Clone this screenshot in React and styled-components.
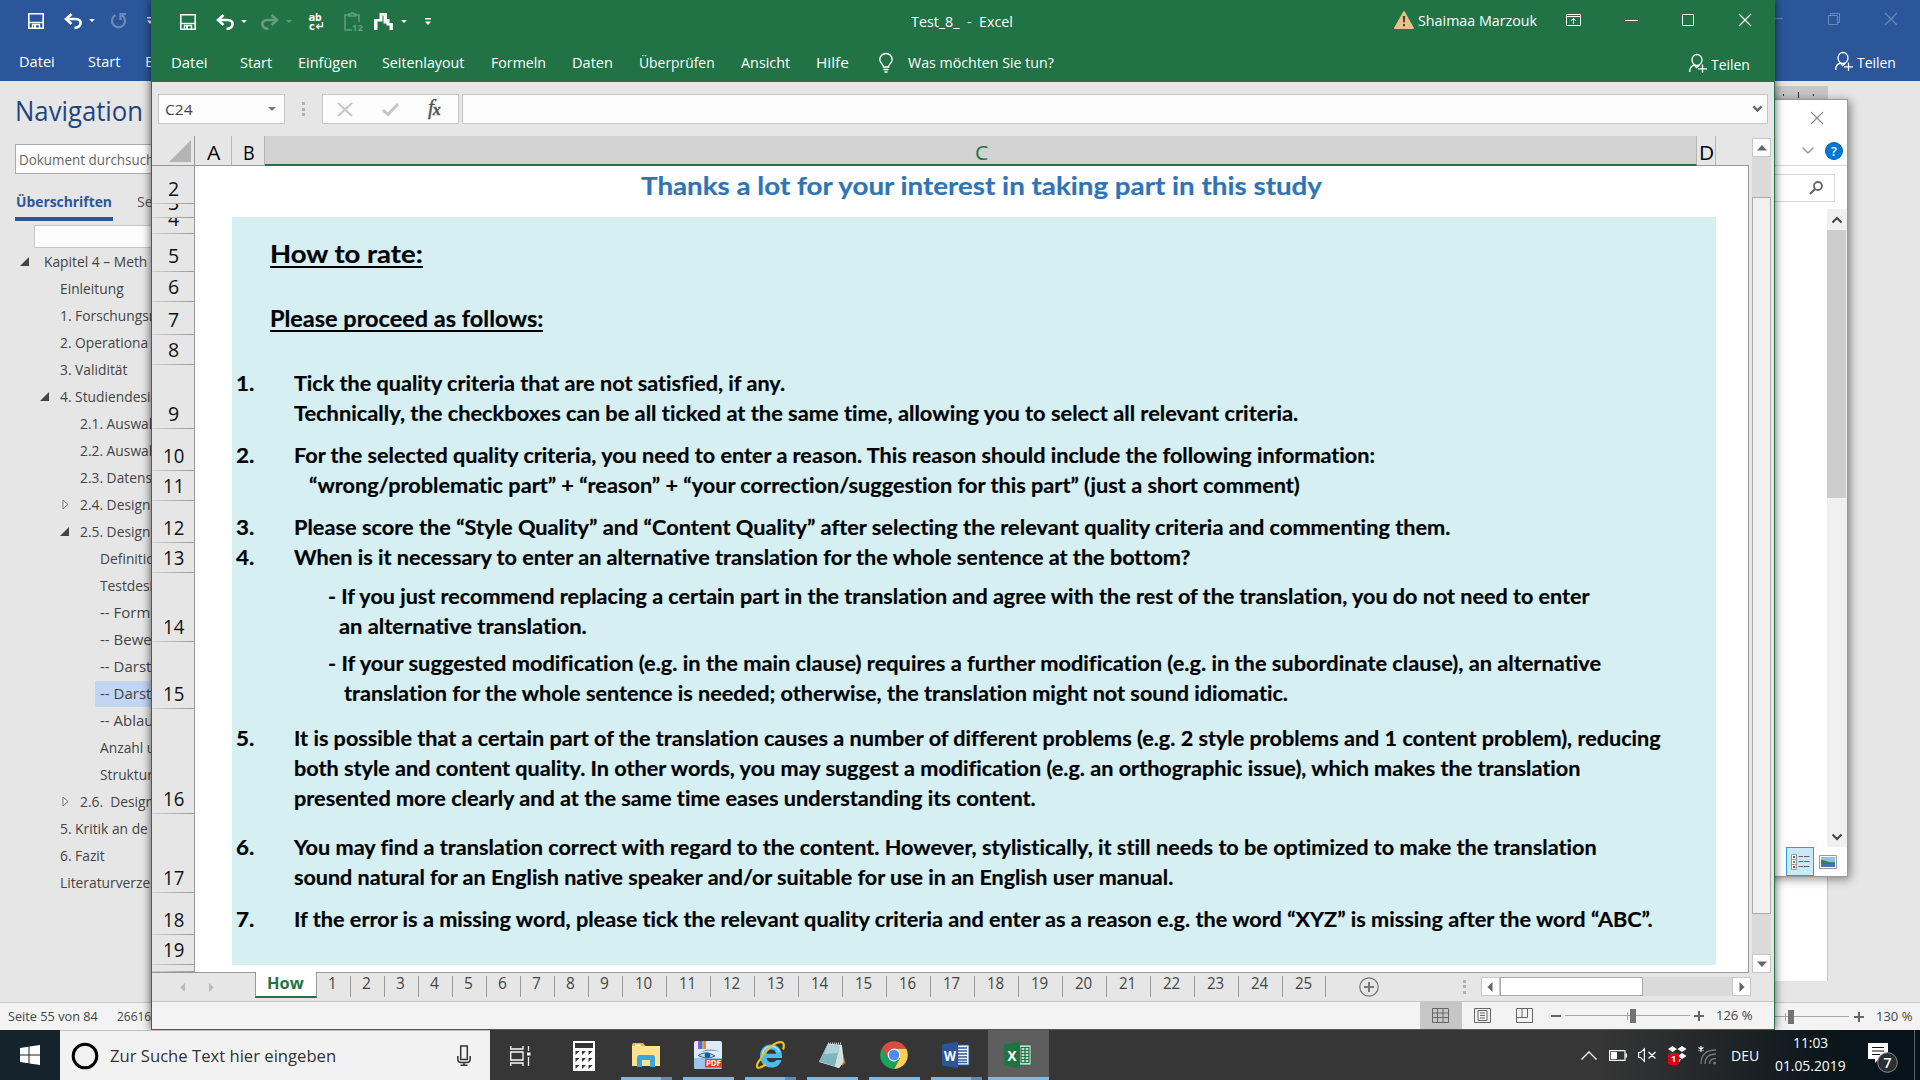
import React, { useLayoutEffect, useRef, useState } from "react";
import styled, { createGlobalStyle, css } from "styled-components";

const GlobalStyle = createGlobalStyle`
  * { box-sizing: border-box; }
  html, body { margin: 0; padding: 0; }
  body { width: 1920px; height: 1080px; overflow: hidden; background: #e6e6e6; }
  svg { display: block; flex: none; overflow: visible; }
`;

const UI = `"Open Sans", "Noto Sans", sans-serif`;
const GREEN = "#217346";
const BLUE = "#2b579a";

/* ---------- text that is condensed to a given measure ---------- */

const FitBox = styled.span`
  display: block;
  flex: none;
  width: ${(p) => p.$w}px;
  margin-left: ${(p) => p.$ml || 0}px;
  white-space: pre;
`;
const FitInner = styled.span`
  display: inline-block;
  transform-origin: 0 50%;
  white-space: pre;
`;

function Fit({ w, ml, children, className }) {
  const ref = useRef(null);
  const [scale, setScale] = useState(1);
  useLayoutEffect(() => {
    if (ref.current) setScale(w / ref.current.offsetWidth);
  }, [w]);
  return (
    <FitBox $w={w} $ml={ml} className={className}>
      <FitInner ref={ref} style={{ transform: `scaleX(${scale})` }}>{children}</FitInner>
    </FitBox>
  );
}

/* ---------- shared pieces ---------- */

const Desktop = styled.div`
  position: relative;
  width: 1920px;
  height: 1080px;
  overflow: hidden;
  background: #e6e6e6;
  font-family: ${UI};
  font-size: 15px;
`;

const Slot = styled.div`
  flex: none;
  margin-left: ${(p) => p.$ml || 0}px;
  margin-top: ${(p) => p.$mt || 0}px;
  opacity: ${(p) => (p.$dim ? 0.3 : 1)};
`;

const TitleRow = styled.div`
  display: flex;
  align-items: center;
  height: ${(p) => p.$h}px;
  line-height: ${(p) => p.$h}px;
  color: #fff;
`;

const TabRow = styled(TitleRow)``;

const Save = () => (
  <svg width="16" height="16" viewBox="0 0 16 16" fill="none" stroke="#fff">
    <path d="M.8.8H15.2V15.2H.8Z" strokeWidth="1.6" />
    <path d="M1 9.5H15" strokeWidth="1.4" />
    <path d="M4.5 15V11.5H11.5V15" strokeWidth="1.4" />
    <path d="M6 12H8V15H6Z" fill="#fff" stroke="none" />
  </svg>
);
const Undo = ({ flip }) => (
  <svg width="18" height="16" viewBox="0 0 18 16" fill="none" stroke="#fff" transform={flip ? "scale(-1,1)" : undefined}>
    <path d="M3 6H11.5C15.5 6 17 8.300 16.500 10.800 16 13.500 13.500 14.800 10.500 15" strokeWidth="2.600" />
    <path d="M7.500 1 2 6 7.500 11" strokeWidth="2.600" />
  </svg>
);
const Caret = ({ color = "#fff", w = 6 }) => (
  <svg width={w} height={w / 2} viewBox="0 0 6 3"><path d="M0 0H6L3 3Z" fill={color} /></svg>
);
const Repeat = () => (
  <svg width="17" height="17" viewBox="0 0 17 17" fill="none" stroke="#fff" strokeWidth="2.200">
    <path d="M5.500 3A6.500 6.500 0 1 0 11.500 3" /><path d="M16 2H10.500V8" />
  </svg>
);
const Customize = () => (
  <svg width="6" height="8" viewBox="0 0 6 8"><path d="M0 0H6V1.400H0ZM0 3.500H6L3 7Z" fill="#fff" /></svg>
);
const SpellSvg = styled.svg`
  font: 700 11px "DejaVu Sans Mono", "Liberation Mono", monospace;
`;
const Spell = () => (
  <SpellSvg width="16" height="18" viewBox="0 0 16 18" fill="#fff">
    <text x="0.500" y="8" textLength="13">ab</text>
    <text x="0.500" y="17">c</text>
    <path d="M14.500 9V13.500H9M11 11 8.500 13.500 11 16" stroke="#fff" strokeWidth="1.300" fill="none" />
  </SpellSvg>
);
const PasteSvg = styled.svg`
  font: 700 9px ${UI};
`;
const Paste = () => (
  <PasteSvg width="19" height="20" viewBox="0 0 19 20" fill="none" stroke="#fff" strokeWidth="1.500">
    <path d="M5 3H1V18H8M12 3H15V10" /><path d="M5 4V2H7A1.200 1.200 0 0 1 9.500 2H11.500V4Z" />
    <text x="8" y="19" fill="#fff" stroke="none" textLength="11">12</text>
  </PasteSvg>
);
const Steps = () => (
  <svg width="19" height="17" viewBox="0 0 19 17" fill="#fff">
    <path d="M0 17V6H5.500V0H13V6H15.500V10H19V17H15.500V12.500H12.500V10.500H9.500V2.500H8.500V8.500H3.500V17Z" />
  </svg>
);
const CloseX = ({ color = "#fff", s = 12 }) => (
  <svg width={s} height={s} viewBox="0 0 12 12" stroke={color} strokeWidth="1.100"><path d="M0 0 12 12M12 0 0 12" /></svg>
);
const Share = () => (
  <svg width="18" height="19" viewBox="0 0 18 19" fill="none" stroke="#fff" strokeWidth="1.300">
    <ellipse cx="8" cy="6" rx="5" ry="5.500" />
    <path d="M.7 18C.7 14 3 11.500 5.500 11L7.500 13.500 10.500 11.200" />
    <path d="M13.500 10.500V19M9 14.800H18" />
  </svg>
);

/* ---------- Word window ---------- */

const WordWindow = styled.section`
  position: absolute;
  left: 0;
  top: 0;
  width: 1920px;
  height: 1030px;
  display: flex;
  flex-direction: column;
  background: #e6e6e6;
`;
const WordHeader = styled.header`
  height: 81px;
  background: ${BLUE};
`;
const Push = styled.div`
  flex: 1;
`;
const WordBody = styled.div`
  flex: 1;
  display: flex;
  justify-content: space-between;
  min-height: 0;
`;
const Sidebar = styled.aside`
  width: 151px;
  overflow: hidden;
  color: #444;
`;
const NavTitle = styled.h2`
  margin: 0;
  padding: 5px 0 0 15px;
  height: 63px;
  font-size: 26.5px;
  font-weight: 400;
  line-height: 50px;
  color: #1e4581;
`;
const SearchInput = styled.div`
  width: 200px;
  height: 30px;
  margin-left: 15px;
  padding-left: 3px;
  border: 1px solid #ababab;
  background: #fff;
  color: #666;
  line-height: 29px;
  font-size: 15px;
`;
const NavTabs = styled.div`
  display: flex;
  height: 48px;
`;
const NavTab = styled.div`
  flex: none;
  margin-left: ${(p) => p.$ml}px;
  height: 47px;
  padding: 9px 1px 0;
  line-height: 37px;
  border-bottom: 4px solid ${(p) => (p.$on ? BLUE : "transparent")};
  color: ${(p) => (p.$on ? BLUE : "#555")};
  font-weight: ${(p) => (p.$on ? 700 : 400)};
`;
const NavDivider = styled.i`
  width: 1px;
  height: 23px;
  margin: 15px 0 0 10px;
  background: #dadada;
`;
const TreeTop = styled.div`
  height: 23px;
  width: 200px;
  margin: 3px 0 0 34px;
  border: 1px solid #c6c6c6;
  background: #fdfdfd;
`;
const TreeRow = styled.div`
  display: flex;
  align-items: center;
  height: 27px;
  line-height: 25px;
  width: 300px;
`;
const TreeArrow = styled.div`
  flex: none;
  width: ${(p) => p.$w}px;
  display: flex;
  justify-content: flex-end;
`;
const TreeText = styled.div`
  flex: none;
  height: 26px;
  width: 200px;
  padding-left: 5px;
  background: ${(p) => (p.$on ? "#c2d5f2" : "transparent")};
  span {
    display: inline-block;
    transform: scaleX(${(p) => (p.$wide ? 1 : 0.92)});
    transform-origin: 0 50%;
    white-space: pre;
  }
`;
const DocArea = styled.div`
  width: 300px;
  margin-right: 92px;
  padding-top: 5px;
  display: flex;
  flex-direction: column;
  height: 900px;
`;
const Ruler = styled.div`
  display: flex;
  align-items: center;
  justify-content: flex-end;
  gap: 14px;
  padding-right: 14px;
  height: 18px;
  background: #c6c6c6;
`;
const Tick = styled.i`
  width: 1px;
  height: ${(p) => p.$h}px;
  background: #333;
`;
const Page = styled.div`
  flex: 1;
  background: #fff;
  border-right: 1px solid #c6c6c6;
`;
const StatusBar = styled.footer`
  display: flex;
  align-items: center;
  flex: none;
  height: 28px;
  border-top: 1px solid #c6c6c6;
  background: #f3f3f3;
  color: #444;
  font-size: 13px;
  line-height: 27px;
`;

const SolidTri = () => (
  <svg width="9" height="9" viewBox="0 0 9 9"><path d="M9 0V9H0Z" fill="#444" /></svg>
);
const HollowTri = () => (
  <svg width="7" height="11" viewBox="0 0 7 11"><path d="M1 1 6 5.500 1 10Z" fill="#fff" stroke="#777" /></svg>
);

const TREE = [
  [39, "solid", "Kapitel 4 – Meth"],
  [55, "", "Einleitung"],
  [55, "", "1. Forschungsr"],
  [55, "", "2. Operationa"],
  [55, "", "3. Validität"],
  [55, "solid", "4. Studiendesi"],
  [75, "", "2.1. Auswal"],
  [75, "", "2.2. Auswal"],
  [75, "", "2.3. Datens"],
  [75, "hollow", "2.4. Design"],
  [75, "solid", "2.5. Design"],
  [95, "", "Definitio"],
  [95, "", "Testdesi"],
  [95, "", "-- Form"],
  [95, "", "-- Bewe"],
  [95, "", "-- Darst"],
  [95, "", "-- Darst", true],
  [95, "", "-- Ablau"],
  [95, "", "Anzahl u"],
  [95, "", "Struktur"],
  [75, "hollow", "2.6.  Design"],
  [55, "", "5. Kritik an de"],
  [55, "", "6. Fazit"],
  [55, "", "Literaturverze"],
];

const ArrowPad = styled.div`
  margin-right: ${(p) => p.$r}px;
`;

const ZoomTrack = styled.div`
  display: flex;
  align-items: center;
  flex: none;
  width: ${(p) => p.$w}px;
  margin-left: ${(p) => p.$ml || 0}px;
  height: 14px;
  background: linear-gradient(#a6a6a6, #a6a6a6) 0 50% / 100% 1px no-repeat;
`;
const ZoomTick = styled.i`
  width: 1px;
  height: 8px;
  margin-left: ${(p) => p.$ml}px;
  background: #a6a6a6;
`;
const ZoomThumb = styled.i`
  width: 6px;
  height: 14px;
  margin-left: 2px;
  background: #737373;
`;
const Sign = ({ plus }) => (
  <svg width="10" height="10" viewBox="0 0 10 10" stroke="#666" strokeWidth="2">
    <path d={plus ? "M0 5H10M5 0V10" : "M0 5H10"} />
  </svg>
);

function Word() {
  return (
    <WordWindow>
      <WordHeader>
        <TitleRow $h={41}>
          <Slot $ml={28}><Save /></Slot>
          <Slot $ml={20}><Undo /></Slot>
          <Slot $ml={7}><Caret /></Slot>
          <Slot $ml={15} $dim><Repeat /></Slot>
          <Slot $ml={20}><Customize /></Slot>
          <Push />
          <Slot $dim $mt={-3}>
            <svg width="12" height="12" viewBox="0 0 12 12"><path d="M0 5.500H12" stroke="#fff" /></svg>
          </Slot>
          <Slot $ml={45} $dim $mt={-3}>
            <svg width="12" height="12" viewBox="0 0 12 12" fill="none" stroke="#fff">
              <path d="M.5 2.500H9.500V11.500H.5ZM2.500 2.500V.5H11.500V9.500H9.500" />
            </svg>
          </Slot>
          <Slot $ml={45} $dim $mt={-3}><CloseX /></Slot>
          <Slot $ml={23} />
        </TitleRow>
        <TabRow $h={40}>
          <Fit w={36} ml={19}>Datei</Fit>
          <Fit w={32} ml={33}>Start</Fit>
          <Fit w={8} ml={25}>E</Fit>
          <Push />
          <Slot $mt={1}><Share /></Slot>
          <Slot $ml={4} $mt={2}><Fit w={39}>Teilen</Fit></Slot>
          <Slot $ml={24} />
        </TabRow>
      </WordHeader>
      <WordBody>
        <Sidebar>
          <NavTitle><Fit w={128}>Navigation</Fit></NavTitle>
          <SearchInput><Fit w={135}>Dokument durchsuch</Fit></SearchInput>
          <NavTabs>
            <NavTab $ml={15} $on><Fit w={96}>Überschriften</Fit></NavTab>
            <NavDivider />
            <NavTab $ml={13}><Fit w={16}>Se</Fit></NavTab>
          </NavTabs>
          <TreeTop />
          {TREE.map(([x, arrow, text, on], i) => (
            <TreeRow key={i}>
              <TreeArrow $w={x}>
                {arrow === "solid" && <ArrowPad $r={x === 39 ? 10 : 6}><SolidTri /></ArrowPad>}
                {arrow === "hollow" && <ArrowPad $r={6}><HollowTri /></ArrowPad>}
              </TreeArrow>
              <TreeText $on={on} $wide={text.startsWith("--")}><span>{text}</span></TreeText>
            </TreeRow>
          ))}
        </Sidebar>
        <DocArea>
          <Ruler><Tick $h={2} /><Tick $h={6} /><Tick $h={2} /></Ruler>
          <Page />
        </DocArea>
      </WordBody>
      <StatusBar>
        <Fit w={90} ml={8}>Seite 55 von 84</Fit>
        <Fit w={34} ml={19}>26616</Fit>
        <Push />
        <ZoomTrack $w={125}><ZoomTick $ml={61} /><ZoomThumb /></ZoomTrack>
        <Slot $ml={5}><Sign plus /></Slot>
        <Fit w={36} ml={12}>130 %</Fit>
        <Slot $ml={8} />
      </StatusBar>
    </WordWindow>
  );
}

/* ---------- Explorer window ---------- */

const Explorer = styled.section`
  position: absolute;
  left: 1500px;
  top: 99px;
  width: 348px;
  height: 778px;
  display: flex;
  flex-direction: column;
  background: #fff;
  border: 1px solid #999;
  box-shadow: 2px 2px 9px rgba(0, 0, 0, 0.45);
`;
const ExplorerBar = styled.div`
  display: flex;
  align-items: center;
  justify-content: flex-end;
  height: ${(p) => p.$h}px;
  padding-right: ${(p) => p.$pr}px;
  gap: 11px;
  border-bottom: ${(p) => (p.$line ? "1px solid #d9d9d9" : "none")};
`;
const SearchBox = styled.div`
  display: flex;
  align-items: center;
  justify-content: flex-end;
  width: 250px;
  height: 28px;
  padding-right: 11px;
  border: 1px solid #d9d9d9;
`;
const ExplorerBody = styled.div`
  flex: 1;
  display: flex;
  justify-content: flex-end;
`;
const FlatScroll = styled.div`
  width: 20px;
  display: flex;
  flex-direction: column;
  align-items: flex-start;
  background: #f0f0f0;
`;
const FlatThumb = styled.div`
  width: 19px;
  height: 268px;
  background: #cdcdcd;
`;
const FlatButton = styled.div`
  width: 19px;
  height: 21px;
  display: flex;
  align-items: center;
  justify-content: center;
`;
const ExplorerFooter = styled.div`
  display: flex;
  align-items: center;
  justify-content: flex-end;
  height: 29px;
  padding-right: 10px;
  gap: 5px;
`;
const ViewButton = styled.div`
  display: flex;
  align-items: center;
  justify-content: center;
  width: 28px;
  height: 29px;
  border: 1px solid #26a0da;
  background: #cbe8f6;
`;
const HelpDot = styled.div`
  width: 18px;
  height: 18px;
  border-radius: 50%;
  background: #0078d7;
  border: 1px solid #0063b1;
  color: #fff;
  font-weight: 600;
  font-size: 13px;
  line-height: 16px;
  text-align: center;
`;
const Chevron = ({ up, color = "#444", w = 10, sw = 2 }) => (
  <svg width={w} height={w * 0.6} viewBox="0 0 10 6" fill="none" stroke={color} strokeWidth={sw}>
    <path d={up ? "M.5 5.500 5 1 9.500 5.500" : "M.5.5 5 5 9.500.5"} />
  </svg>
);

function ExplorerWindow() {
  return (
    <Explorer>
      <ExplorerBar $h={36} $pr={24}><CloseX color="#888" /></ExplorerBar>
      <ExplorerBar $h={30} $pr={4} $line>
        <Chevron color="#999" w={12} sw={1.2} />
        <HelpDot>?</HelpDot>
      </ExplorerBar>
      <ExplorerBar $h={43} $pr={12}>
        <SearchBox>
          <svg width="14" height="14" viewBox="0 0 14 14" fill="none" stroke="#666" strokeWidth="1.800">
            <circle cx="9" cy="5" r="4" /><path d="M6 8 1 13" strokeWidth="2.200" />
          </svg>
        </SearchBox>
      </ExplorerBar>
      <ExplorerBody>
        <FlatScroll>
          <FlatButton><Chevron up /></FlatButton>
          <FlatThumb />
          <Push />
          <FlatButton><Chevron /></FlatButton>
        </FlatScroll>
      </ExplorerBody>
      <ExplorerFooter>
        <ViewButton>
          <svg width="19" height="16" viewBox="0 0 19 16" fill="#fff" stroke="#999">
            <path d="M.5.5H5.500V15.500H.5ZM.5 5.500H5.500M.5 10.500H5.500" />
            <path d="M7.500 2.500H12M13 2.500H18.500M7.500 7.500H12M13 7.500H18.500M7.500 12.500H12M13 12.500H18.500" stroke="#666" />
            <path d="M2 2H4V4H2Z" fill="#27b" stroke="none" />
            <path d="M2 7H4V9H2Z" fill="#a63" stroke="none" />
            <path d="M2 12H4V14H2Z" fill="#c22" stroke="none" />
          </svg>
        </ViewButton>
        <svg width="18" height="14" viewBox="0 0 18 14">
          <path d="M.5.5H17.500V13.500H.5Z" fill="#fff" stroke="#999" />
          <path d="M2 2H16V12H2Z" fill="#8fc0f0" />
          <path d="M2 5C5 4.500 9 8 16 7V9H2Z" fill="#3d7a55" />
          <path d="M2 9H16V12H2Z" fill="#3e78ad" />
        </svg>
      </ExplorerFooter>
    </Explorer>
  );
}

/* ---------- Excel window ---------- */

const ExcelWindow = styled.section`
  position: absolute;
  left: 151px;
  top: 0;
  width: 1624px;
  height: 1030px;
  display: flex;
  flex-direction: column;
  border: 1px solid ${GREEN};
  border-top: 0;
  background: #e6e6e6;
  box-shadow: 0 0 9px rgba(0, 0, 0, 0.65);
`;
const ExcelHeader = styled.header`
  flex: none;
  height: 82px;
  background: ${GREEN};
`;
const FormulaBar = styled.div`
  flex: none;
  display: flex;
  height: 54px;
  padding: 12px 6px 12px;
`;
const Field = styled.div`
  display: flex;
  align-items: center;
  flex: ${(p) => (p.$w ? "none" : 1)};
  width: ${(p) => (p.$w ? p.$w + "px" : "auto")};
  margin-left: ${(p) => p.$ml || 0}px;
  height: 30px;
  border: 1px solid #c6c6c6;
  background: #fdfdfd;
  color: #444;
  line-height: 28px;
`;
const Dots = styled.div`
  flex: none;
  width: 3px;
  height: 14px;
  margin-left: ${(p) => p.$ml}px;
  margin-top: ${(p) => p.$mt || 0}px;
  background: repeating-linear-gradient(#b0b0b0 0 3px, transparent 3px 5.5px);
`;
const FxText = styled.span`
  display: block;
  font: italic 21px "Liberation Serif", serif;
  letter-spacing: -1px;
  color: #555;
  -webkit-text-stroke: 0.4px #555;
  sub { font-size: 16px; vertical-align: -1px; font-weight: 700; }
`;
const Main = styled.div`
  flex: none;
  display: flex;
  height: 837px;
`;
const Grid = styled.div`
  width: 1596px;
  display: flex;
  flex-direction: column;
`;
const ColHeads = styled.div`
  flex: none;
  display: flex;
  height: 30px;
`;
const ColHead = styled.div`
  width: ${(p) => p.$w}px;
  height: 30px;
  padding-left: 1px;
  border-right: 1px solid #b4b4b4;
  border-bottom: ${(p) => (p.$on ? `2px solid ${GREEN}` : "1px solid #999")};
  background: ${(p) => (p.$on ? "#d2d2d2" : "#e6e6e6")};
  color: ${(p) => (p.$on ? GREEN : "#000")};
  font-size: 19.5px;
  line-height: 33px;
  display: flex;
  justify-content: center;
`;
const Corner = styled.div`
  width: 43px;
  height: 30px;
  display: flex;
  align-items: flex-start;
  justify-content: flex-end;
  padding: 4px 3px 0 0;
  border-right: 1px solid #999;
  border-bottom: 1px solid #999;
`;
const HeadRest = styled.div`
  flex: 1;
  border-bottom: 1px solid #999;
`;
const Row = styled.div`
  flex: none;
  display: flex;
  height: ${(p) => p.$h}px;
`;
const RowHead = styled.div`
  flex: none;
  width: 43px;
  display: flex;
  flex-direction: column;
  justify-content: flex-end;
  align-items: center;
  overflow: hidden;
  padding-left: 1px;
  padding-bottom: ${(p) => (p.$lift ? 1 : 0)}px;
  border-right: 1px solid #999;
  background: linear-gradient(90deg, #cfcfcf, #999) 0 100% / 100% 1px no-repeat, #e6e6e6;
  color: #111;
  font-size: 19.5px;
  line-height: 30px;
`;
const ColA = styled.div`
  flex: none;
  width: 37px;
  background: #fff;
`;
const Fill = styled.div`
  flex: none;
  width: 1484px;
  display: flex;
  align-items: flex-end;
  margin-top: ${(p) => (p.$first ? -1 : 0)}px;
  padding-bottom: 1px;
  background: ${(p) => (p.$plain ? "#fff" : "#d5eff2")};
  color: #000;
  font-family: Lato, "Liberation Sans", sans-serif;
  font-weight: 700;
  font-size: 20.6px;
  font-variant-ligatures: none;
  -webkit-text-stroke: 0.2px currentColor;
  line-height: 30px;
`;
const Rest = styled.div`
  flex: 1;
  background: #fff;
`;
const ColB = styled.div`
  width: 33px;
  padding-left: 4px;
  align-self: flex-end;
  padding-bottom: ${(p) => p.$pb}px;
`;
const ColC = styled.div`
  flex: 1;
  ${(p) => p.$center && css`padding-bottom: 3px; color: #2e75b6; font-size: 25.500px;`}
`;
const HeadingWrap = styled.div`
  padding-left: 33px;
`;
const Heading = styled.div`
  width: ${(p) => p.$w}px;
  margin-left: 5px;
  height: 30px;
  line-height: ${(p) => p.$lh}px;
  font-size: ${(p) => p.$fs}px;
  border-bottom: 2px solid #000;
  margin-bottom: ${(p) => p.$mb}px;
`;

const ROWS = [
  { n: 2, h: 38, title: true },
  { n: 3, h: 14 },
  { n: 4, h: 16 },
  { n: 5, h: 38, head: ["How to rate:", 153, 25.5, 3, 31] },
  { n: 6, h: 30 },
  { n: 7, h: 33, head: ["Please proceed as follows:", 273, 22.2, 2, 33] },
  { n: 8, h: 30 },
  { n: 9, h: 64, num: "1.", lines: [
    [28.5, 490, "Tick the quality criteria that are not satisfied, if any."],
    [28.5, 1003, "Technically, the checkboxes can be all ticked at the same time, allowing you to select all relevant criteria."]] },
  { n: 10, h: 42, num: "2.", lines: [
    [28.5, 1080, "For the selected quality criteria, you need to enter a reason. This reason should include the following information:"]] },
  { n: 11, h: 30, lines: [
    [44, 990, "“wrong/problematic part” + “reason” + “your correction/suggestion for this part” (just a short comment)"]] },
  { n: 12, h: 42, num: "3.", lines: [
    [28.5, 1155, "Please score the “Style Quality” and “Content Quality” after selecting the relevant quality criteria and commenting them."]] },
  { n: 13, h: 30, num: "4.", lines: [
    [29, 895, "When is it necessary to enter an alternative translation for the whole sentence at the bottom?"]] },
  { n: 14, h: 69, lines: [
    [63, 1261, "- If you just recommend replacing a certain part in the translation and agree with the rest of the translation, you do not need to enter"],
    [73.5, 246.5, "an alternative translation."]] },
  { n: 15, h: 67, lines: [
    [63, 1272, "- If your suggested modification (e.g. in the main clause) requires a further modification (e.g. in the subordinate clause), an alternative"],
    [78.5, 943.5, "translation for the whole sentence is needed; otherwise, the translation might not sound idiomatic."]] },
  { n: 16, h: 105, num: "5.", lines: [
    [28.5, 1366, "It is possible that a certain part of the translation causes a number of different problems (e.g. 2 style problems and 1 content problem), reducing"],
    [28.5, 1286, "both style and content quality. In other words, you may suggest a modification (e.g. an orthographic issue), which makes the translation"],
    [28.5, 741, "presented more clearly and at the same time eases understanding its content."]] },
  { n: 17, h: 79, num: "6.", lines: [
    [29, 1302, "You may find a translation correct with regard to the content. However, stylistically, it still needs to be optimized to make the translation"],
    [28.5, 878, "sound natural for an English native speaker and/or suitable for use in an English user manual."]] },
  { n: 18, h: 42, num: "7.", lines: [
    [28.5, 1357.5, "If the error is a missing word, please tick the relevant quality criteria and enter as a reason e.g. the word “XYZ” is missing after the word “ABC”."]] },
  { n: 19, h: 30 },
];

function SheetRow({ row }) {
  const lines = row.lines || [];
  return (
    <Row $h={row.h}>
      <RowHead $lift={row.n === 5}><Fit w={row.n > 9 ? 21 : 11}>{row.n}</Fit></RowHead>
      <ColA />
      <Fill $plain={row.n < 4} $first={row.n === 4}>
        {row.num && <ColB $pb={(lines.length - 1) * 30}><Fit w={18.5}>{row.num}</Fit></ColB>}
        <ColC $center={row.title}>
          {row.title && <Fit w={681} ml={408.5}>Thanks a lot for your interest in taking part in this study</Fit>}
          {row.head && (
            <HeadingWrap>
              <Heading $w={row.head[1]} $fs={row.head[2]} $mb={row.head[3]} $lh={row.head[4]}>
                <Fit w={row.head[1]}>{row.head[0]}</Fit>
              </Heading>
            </HeadingWrap>
          )}
          {lines.map(([x, w, t], i) => (
            <Fit key={i} ml={row.num ? x : x + 33} w={w + 1}>{t}</Fit>
          ))}
        </ColC>
      </Fill>
      <Rest />
    </Row>
  );
}
const GridTail = styled(Row)`
  border-bottom: 1px solid #999;
`;
const RightEdge = styled.div`
  flex: none;
  width: 1px;
  margin-top: 29px;
  background: #999;
`;
const VScroll = styled.div`
  display: flex;
  flex-direction: column;
  width: 19px;
  height: 835px;
  margin: 2px 0 0 3px;
`;
const ArrowBtn = styled.div`
  flex: none;
  display: flex;
  align-items: center;
  justify-content: center;
  width: 19px;
  height: 19px;
  border: 1px solid #c6c6c6;
  background: #fdfdfd;
`;
const VTrack = styled.div`
  flex: 1;
  padding-top: 40px;
  background: #dadada;
`;
const VThumb = styled.div`
  height: 717px;
  border: 1px solid #ababab;
  background: #f0f0f0;
`;
const Arrow = ({ d }) => (
  <svg width="10" height="10" viewBox="0 0 10 10" fill="#666">
    <path d={{ up: "M5 2 10 7.500H0Z", down: "M0 2.500H10L5 8Z", left: "M6.500 0V10L1.500 5Z", right: "M2.500 0V10L7.500 5Z" }[d]} />
  </svg>
);

const TabStrip = styled.div`
  flex: none;
  display: flex;
  height: 28px;
  color: #444;
`;
const NavArrows = styled.div`
  display: flex;
  align-items: center;
  width: 103px;
  padding-left: 28px;
  gap: 24px;
`;
const SheetTab = styled.div`
  flex: none;
  display: flex;
  justify-content: center;
  width: ${(p) => p.$w}px;
  height: 21px;
  margin-top: 3px;
  padding-right: ${(p) => (p.$w > 40 ? 1 : 2)}px;
  border-right: 1px solid #999;
  font-size: 15.5px;
  line-height: 15px;
`;
const ActiveTab = styled.div`
  flex: none;
  display: flex;
  justify-content: center;
  width: 62px;
  height: 26px;
  margin-top: -1px;
  padding-right: 1px;
  border: 1px solid #999;
  border-top: 0;
  border-bottom: 2px solid ${GREEN};
  background: #fff;
  color: ${GREEN};
  font-weight: 700;
  font-size: 15.5px;
  line-height: 23px;
`;
const HScroll = styled.div`
  display: flex;
  width: 270px;
  height: 19px;
  margin: 4px 0 0 15px;
  background: #dadada;
`;
const HThumb = styled.div`
  width: 143px;
  height: 19px;
  border: 1px solid #ababab;
  background: #fff;
`;
const ViewIcon = styled.div`
  flex: none;
  display: flex;
  align-items: center;
  justify-content: center;
  width: 42px;
  height: 27px;
  padding-right: 1px;
  background: ${(p) => (p.$on ? "#c6c6c6" : "transparent")};
`;
const TABS = Array.from({ length: 25 }, (_, i) => i + 1);
const MENU = [
  ["Datei", 19, 37], ["Start", 32, 32], ["Einfügen", 26, 59], ["Seitenlayout", 26, 83],
  ["Formeln", 26, 55], ["Daten", 26, 41], ["Überprüfen", 26, 76], ["Ansicht", 26, 49], ["Hilfe", 27, 33],
];

function Excel() {
  return (
    <ExcelWindow>
      <ExcelHeader>
        <TitleRow $h={42}>
          <Slot $ml={28} $mt={1}><Save /></Slot>
          <Slot $ml={20} $mt={1}><Undo /></Slot>
          <Slot $ml={7}><Caret /></Slot>
          <Slot $ml={14} $mt={1} $dim><Undo flip /></Slot>
          <Slot $ml={7} $dim><Caret /></Slot>
          <Slot $ml={16} $mt={1}><Spell /></Slot>
          <Slot $ml={20} $mt={1} $dim><Paste /></Slot>
          <Slot $ml={11}><Steps /></Slot>
          <Slot $ml={8}><Caret /></Slot>
          <Slot $ml={18} $mt={2}><Customize /></Slot>
          <Fit w={102} ml={480}>Test_8_  -  Excel</Fit>
          <Slot $ml={381} $mt={-3}>
            <svg width="20" height="18" viewBox="0 0 20 18">
              <path d="M10 .8 19.200 17.200H.8Z" fill="#eac282" stroke="#eac282" strokeLinejoin="round" strokeWidth="1.500" />
              <path d="M8.800 5H11.200L10.800 11.500H9.200ZM9 13H11V15.200H9Z" fill="#444" />
            </svg>
          </Slot>
          <Slot $ml={4} $mt={-2}><Fit w={119}>Shaimaa Marzouk</Fit></Slot>
          <Slot $ml={29} $mt={-2}>
            <svg width="15" height="12" viewBox="0 0 15 12" fill="none" stroke="#fff">
              <path d="M.5.5H14.500V11.500H.5ZM.5 2.500H14.500M7.500 10V4.500M5 7 7.500 4.500 10 7" />
            </svg>
          </Slot>
          <Slot $ml={44} $mt={-2}>
            <svg width="13" height="11" viewBox="0 0 13 11"><path d="M0 5.500H13" stroke="#fff" /></svg>
          </Slot>
          <Slot $ml={44} $mt={-2}>
            <svg width="12" height="12" viewBox="0 0 12 12" fill="none" stroke="#fff"><path d="M.5.5H11.500V11.500H.5Z" /></svg>
          </Slot>
          <Slot $ml={45} $mt={-2}><CloseX /></Slot>
        </TitleRow>
        <TabRow $h={40}>
          {MENU.map(([t, ml, w]) => <Fit key={t} ml={ml} w={w - 0.2}>{t}</Fit>)}
          <Slot $ml={30} $mt={2}>
            <svg width="14" height="20" viewBox="0 0 14 20" fill="none" stroke="#fff" strokeWidth="1.300">
              <path d="M4.500 14C4.500 11 .8 10 .8 6.500A6.200 6 0 0 1 13.200 6.500C13.200 10 9.500 11 9.500 14ZM4.500 16.500H9.500M5.500 19H8.500" />
            </svg>
          </Slot>
          <Fit w={146} ml={15}>Was möchten Sie tun?</Fit>
          <Push />
          <Slot $mt={2}><Share /></Slot>
          <Slot $ml={4} $mt={3}><Fit w={39}>Teilen</Fit></Slot>
          <Slot $ml={24} />
        </TabRow>
      </ExcelHeader>
      <FormulaBar>
        <Field $w={127}>
          <Fit w={28} ml={6}>C24</Fit>
          <Slot $ml={75}><Caret color="#777" w={8} /></Slot>
        </Field>
        <Dots $ml={17} $mt={8} />
        <Field $w={137} $ml={17}>
          <Slot $ml={15}><svg width="14" height="13" viewBox="0 0 14 13" stroke="#c6c6c6" strokeWidth="2"><path d="M0 0 14 13M14 0 0 13" /></svg></Slot>
          <Slot $ml={30}><svg width="17" height="13" viewBox="0 0 17 13" fill="none" stroke="#c6c6c6" strokeWidth="3"><path d="M1 7 6 11.500 16 1" /></svg></Slot>
          <Slot $ml={29} $mt={-3}><FxText>f<sub>x</sub></FxText></Slot>
        </Field>
        <Field $ml={3}>
          <Push />
          <Slot><Chevron color="#666" w={9} sw={2.6} /></Slot>
          <Slot $ml={5} />
        </Field>
      </FormulaBar>
      <Main>
        <Grid>
          <ColHeads>
            <Corner><svg width="22" height="22" viewBox="0 0 22 22"><path d="M22 0V22H0Z" fill="#b4b4b4" /></svg></Corner>
            <ColHead $w={37}><Fit w={13}>A</Fit></ColHead>
            <ColHead $w={33}><Fit w={12}>B</Fit></ColHead>
            <ColHead $w={1432} $on><Fit w={13}>C</Fit></ColHead>
            <ColHead $w={19}><Fit w={15}>D</Fit></ColHead>
            <HeadRest />
          </ColHeads>
          {ROWS.map((r) => <SheetRow key={r.n} row={r} />)}
          <GridTail $h={8}><RowHead /><Rest /></GridTail>
        </Grid>
        <RightEdge />
        <VScroll>
          <ArrowBtn><Arrow d="up" /></ArrowBtn>
          <VTrack><VThumb /></VTrack>
          <ArrowBtn><Arrow d="down" /></ArrowBtn>
        </VScroll>
      </Main>
      <TabStrip>
        <NavArrows>
          <svg width="5" height="9" viewBox="0 0 5 9"><path d="M5 0V9L0 4.500Z" fill="#bbb" /></svg>
          <svg width="5" height="9" viewBox="0 0 5 9"><path d="M0 0V9L5 4.500Z" fill="#bbb" /></svg>
        </NavArrows>
        <ActiveTab><Fit w={37}>How</Fit></ActiveTab>
        {TABS.map((n) => (
          <SheetTab key={n} $w={n < 10 ? 34 : n === 25 ? 43 : 44}><Fit w={n < 10 ? 9 : 17.5}>{n}</Fit></SheetTab>
        ))}
        <Slot $ml={33} $mt={4}>
          <svg width="20" height="20" viewBox="0 0 20 20" fill="none" stroke="#777">
            <circle cx="10" cy="10" r="9.200" strokeWidth="1.200" /><path d="M5 10H15M10 5V15" strokeWidth="2" />
          </svg>
        </Slot>
        <Dots $ml={84} $mt={7} />
        <HScroll>
          <ArrowBtn><Arrow d="left" /></ArrowBtn>
          <HThumb />
          <Push />
          <ArrowBtn><Arrow d="right" /></ArrowBtn>
        </HScroll>
      </TabStrip>
      <StatusBar>
        <Push />
        <ViewIcon $on>
          <svg width="17" height="15" viewBox="0 0 17 15" fill="none" stroke="#666">
            <path d="M.5.5H16.500V14.500H.5ZM.5 5H16.500M.5 9.500H16.500M5.500 0V15M11 0V15" />
          </svg>
        </ViewIcon>
        <ViewIcon>
          <svg width="17" height="15" viewBox="0 0 17 15" fill="none" stroke="#666">
            <path d="M.5.5H16.500V14.500H.5ZM4 2.500H13V12.500H4ZM6 5H11M6 7.500H11M6 10H11" />
          </svg>
        </ViewIcon>
        <ViewIcon>
          <svg width="17" height="15" viewBox="0 0 17 15" fill="none" stroke="#666">
            <path d="M.5.5H16.500V14.500H.5ZM.5 9.500H11.500V.5M6 .5V9.500" />
          </svg>
        </ViewIcon>
        <Slot $ml={5}><Sign /></Slot>
        <ZoomTrack $w={125} $ml={4}><ZoomTick $ml={62} /><ZoomThumb /></ZoomTrack>
        <Slot $ml={4}><Sign plus /></Slot>
        <Fit w={36} ml={12}>126 %</Fit>
        <Slot $ml={22} />
      </StatusBar>
    </ExcelWindow>
  );
}

/* ---------- taskbar ---------- */

const Taskbar = styled.div`
  position: absolute;
  left: 0;
  top: 1030px;
  width: 1920px;
  height: 50px;
  display: flex;
  background: linear-gradient(90deg, #363636 0, #363636 1600px, #222628 1720px, #0c171c 1820px, #06131b 1920px);
  color: #fff;
`;
const StartButton = styled.div`
  display: flex;
  align-items: center;
  justify-content: center;
  width: 60px;
  background: #14232c;
`;
const SearchField = styled.div`
  display: flex;
  align-items: center;
  width: 430px;
  padding-left: 12px;
  background: #f2f2f2;
  border-top: 1px solid #c0c0c0;
  color: #333;
  font-size: 17px;
  line-height: 49px;
`;
const TaskButton = styled.div`
  flex: none;
  display: flex;
  flex-direction: column;
  align-items: center;
  justify-content: space-between;
  width: ${(p) => p.$w}px;
  margin-left: ${(p) => p.$ml}px;
  background: ${(p) => (p.$on ? "#5e5e5e" : "transparent")};
`;
const IconArea = styled.div`
  flex: 1;
  display: flex;
  align-items: center;
  padding: 2px 1px 0 0;
`;
const Underline = styled.div`
  align-self: stretch;
  height: 3px;
  background: ${(p) => (p.$split ? "linear-gradient(90deg, #76b9ed 40px, #5a8db8 40px)" : "#76b9ed")};
`;
const Clock = styled.div`
  display: flex;
  flex-direction: column;
  align-items: center;
  width: 72px;
  margin-left: 15px;
  padding-top: 1px;
  line-height: 23px;
`;
const Tray = styled.div`
  display: flex;
  align-items: center;
`;
const ShowDesktop = styled.div`
  width: 6px;
  border-left: 1px solid #5a6468;
`;
const BadgeSvg = styled.svg`
  font: 600 14px ${UI};
`;
const LetterSvg = styled.svg`
  font: 700 ${(p) => p.$fs}px ${UI};
`;

const Files = () => (
  <svg width="28" height="24" viewBox="0 0 28 24">
    <path d="M0 1.500Q0 0 1.500 0H11L13.500 3H0Z" fill="#f5b62a" /><path d="M3 1.500H9V3H3Z" fill="#fff" />
    <path d="M0 3H28V23H0Z" fill="#fee291" />
    <path d="M5 24V14.500Q5 12 7.500 12H20.500Q23 12 23 14.500V24H18V17H10V24Z" fill="#3aa7dd" />
  </svg>
);
const Pdf = () => (
  <LetterSvg $fs={8} width="28" height="28" viewBox="0 0 28 28">
    <rect width="28" height="28" rx="2" fill="#dcebf8" />
    <path d="M0 17H28V26Q28 28 26 28H2Q0 28 0 26Z" fill="#9cc3ea" />
    <path d="M4 0H6V8H4Z" fill="#d33ae0" /><path d="M6 0H8V8H6Z" fill="#3c6cf0" />
    <path d="M8 0H10V8H8Z" fill="#7ad04a" /><path d="M10 0H12V8H10Z" fill="#f07a4a" />
    <path d="M4 14.500Q12 9 21 15Q13 19 4 14.500Z" fill="#c6dcef" stroke="#2b5f9e" strokeWidth="1" />
    <path d="M7 11Q15 6.500 26 10.500Q16 9 7 11Z" fill="#7b93b3" />
    <circle cx="13.500" cy="14.300" r="2.800" fill="#1a5f96" />
    <path d="M11 18H28V26.500H11Z" fill="#ea3323" />
    <text x="12" y="25.200" fill="#fff" textLength="15">PDF</text>
  </LetterSvg>
);
const Explorer11 = () => (
  <svg width="30" height="28" viewBox="0 0 30 28">
    <path d="M16 3.500C23 3.500 27.500 8.500 27 17H11.500C12 20 14 21.200 17 21.200C19 21.200 20.500 20.500 21.500 19H26.500C25 24 21.500 26.500 16.500 26.500C9.500 26.500 5 21.800 5 15C5 8.500 9.500 3.500 16 3.500ZM11.500 12.800H21C20.800 10 19 8.500 16.300 8.500C13.700 8.500 11.900 10.200 11.500 12.800Z" fill="#4bbcf0" />
    <path d="M7.500 13C8 8.500 11 5.500 16 5.500C20 5.500 23 7.500 24.500 11" stroke="#a5e6fc" strokeWidth="1.500" fill="none" />
    <path d="M6 17.500C1 23 .5 28 5 26.500C7.500 25.500 9 24.500 11 23M28 8.500C29.500 4.500 29 1.500 26.500 1.200C22 .5 12 6 6 17.500" stroke="#f3bd1d" strokeWidth="2.200" fill="none" />
  </svg>
);
const Notepad = () => (
  <svg width="28" height="28" viewBox="0 0 28 28">
    <path d="M23 5 27.500 22 24 25Z" fill="#a97b33" />
    <path d="M10 2.500 24 4 25.500 21 21 27 1 21Z" fill="#e7eef0" />
    <path d="M9.500 3.500 22 5 17 25.500 1 20.500Z" fill="#7fb5c0" />
    <path d="M9.500 3.500 22 5 20 12 6 13Z" fill="#acd3d9" />
    <path d="M22 5 25.500 21 21 27 17 25.500Z" fill="#d5dfe2" />
    <path d="M10 2.500H24" stroke="#ccc" strokeWidth="2" strokeDasharray="1 1" />
  </svg>
);
const Chrome = () => (
  <svg width="28" height="28" viewBox="0 0 28 28">
    <path d="M14 7.500H26.200A14 14 0 0 1 14 28L20 17Z" fill="#fdd04f" />
    <path d="M2 7A14 14 0 0 0 14 28L19.700 17.300 9 18Z" fill="#1aa261" />
    <path d="M2 7 8.400 17.500 14 7.500H26.300A14 14 0 0 0 2 7Z" fill="#dd4b3e" />
    <circle cx="14" cy="14" r="6.400" fill="#f5f5f5" /><circle cx="14" cy="14" r="5.200" fill="#4c8bf5" />
  </svg>
);
const Office = ({ letter, color, deep, sheet }) => (
  <LetterSvg $fs={15} width="28" height="28" viewBox="0 0 28 28">
    <path d="M14 4H27V24H14Z" fill="#fff" stroke={color} />
    {sheet ? (
      <path d="M17 6.500H25V21.500H17ZM21 6V22M17 9.500H25M17 12.500H25M17 15.500H25M17 18.500H25" stroke={color} strokeWidth="1.300" fill="none" />
    ) : (
      <path d="M16 7H25M16 10H25M16 13H25M16 16H25M16 19H25M16 21.500H25" stroke={color} strokeWidth="1.500" />
    )}
    <path d="M0 3.500 16 .5V27.500L0 24.500Z" fill={deep} />
    <text x={letter === "W" ? 2 : 3.5} y="19.500" fill="#fff" textLength={letter === "W" ? 12 : 9} lengthAdjust="spacingAndGlyphs">{letter}</text>
  </LetterSvg>
);

function Bar() {
  return (
    <Taskbar>
      <StartButton>
        <svg width="20" height="20" viewBox="0 0 20 20" fill="#fff">
          <path d="M0 3 8.500 1.800V9.500H0ZM9.500 1.600 20 0V9.500H9.500ZM0 10.500H8.500V18.200L0 17ZM9.500 10.500H20V20L9.500 18.400Z" />
        </svg>
      </StartButton>
      <SearchField>
        <svg width="26" height="26" viewBox="0 0 26 26" fill="none">
          <circle cx="13" cy="13" r="11.800" stroke="#000" strokeWidth="3" />
        </svg>
        <Fit w={226} ml={12}>Zur Suche Text hier eingeben</Fit>
        <Slot $ml={121}>
          <svg width="14" height="21" viewBox="0 0 14 21" fill="none" stroke="#333" strokeWidth="1.500">
            <rect x="3.700" y="1" width="6.600" height="13.500" /><path d="M.8 11V14Q.8 17.500 4 17.500H10Q13.200 17.500 13.200 14V11M7 17.500V20.200M3.500 20.200H10.500" />
          </svg>
        </Slot>
      </SearchField>
      <TaskButton $ml={20} $w={21}><IconArea>
        <svg width="21" height="20" viewBox="0 0 21 20" fill="none" stroke="#fff" strokeWidth="1.300">
          <path d="M.7 0V3H13V0M.7 6H13V14H.7ZM.7 20V17H13V20M18.500 0V5M18.500 11V20" /><path d="M17 6.500H20.500V9.500H17Z" fill="#fff" stroke="none" />
        </svg>
      </IconArea></TaskButton>
      <TaskButton $ml={42} $w={22}><IconArea>
        <svg width="22" height="30" viewBox="0 0 22 30">
          <path d="M0 0H22V30H0Z" fill="#fff" /><path d="M2 2H20V7H2Z" fill="#333" />
          {[10, 17, 24].map((y) => [2.5, 9, 15.5].map((x) => <path key={x + "-" + y} d={`M${x} ${y}h4l-1.500 1.500l-2.500 2.500z`} fill="#333" />))}
        </svg>
      </IconArea></TaskButton>
      <TaskButton $ml={26} $w={51}><IconArea><Files /></IconArea><Underline $split /></TaskButton>
      <TaskButton $ml={11} $w={51}><IconArea><Pdf /></IconArea><Underline /></TaskButton>
      <TaskButton $ml={11} $w={51}><IconArea><Explorer11 /></IconArea><Underline $split /></TaskButton>
      <TaskButton $ml={11} $w={51}><IconArea><Notepad /></IconArea><Underline /></TaskButton>
      <TaskButton $ml={11} $w={51}><IconArea><Chrome /></IconArea><Underline /></TaskButton>
      <TaskButton $ml={11} $w={51}><IconArea><Office letter="W" color="#2b579a" deep="#2a5699" /></IconArea><Underline $split /></TaskButton>
      <TaskButton $ml={6} $w={61} $on><IconArea><Office letter="X" color="#217346" deep="#1f7244" sheet /></IconArea><Underline /></TaskButton>
      <Push />
      <Tray>
        <svg width="16" height="9" viewBox="0 0 16 9" fill="none" stroke="#fff" strokeWidth="1.400"><path d="M.5 8.500 8 1 15.500 8.500" /></svg>
        <Slot $ml={12}>
          <svg width="18" height="11" viewBox="0 0 18 11" fill="none" stroke="#fff">
            <path d="M.6.6H16V10.400H.6Z" strokeWidth="1.200" /><path d="M2 2H8V9H2ZM16.500 3.500H18V7.500H16.500Z" fill="#fff" stroke="none" />
          </svg>
        </Slot>
        <Slot $ml={11}>
          <svg width="18" height="14" viewBox="0 0 18 14" fill="none" stroke="#fff" strokeWidth="1.200">
            <path d="M.6 4.500H2.500L6.400.8V13.200L2.500 9.500H.6ZM10.500 4 17.500 10.500M17.500 4 10.500 10.500" />
          </svg>
        </Slot>
        <Slot $ml={12}>
          <LetterSvg $fs={9} width="19" height="20" viewBox="0 0 19 20" fill="#fff">
            <path d="M4.500 1 9 4 4.500 7 0 4ZM14 1 18.500 4 14 7 9.500 4ZM14 8 18.500 11 14 14 10 11ZM9.500 15 13 14 11.500 17Z" />
            <rect y="8" width="11" height="12" rx="2" fill="#d9001b" />
            <text x="3" y="17.200" fill="#fff">1</text>
          </LetterSvg>
        </Slot>
        <Slot $ml={11}>
          <svg width="19" height="19" viewBox="0 0 19 19" fill="none" stroke="#777" strokeWidth="1.300">
            <path d="M3 18Q3 4 18 4M7 18Q7 8 18 8M11.500 18Q11.500 12.500 18 12.500" />
            <circle cx="16.500" cy="17" r="1.500" fill="#777" stroke="none" />
            <path d="M3 0V6M.5 1.500 5.500 4.500M5.500 1.500 .5 4.500" stroke="#fff" strokeWidth="1.100" />
          </svg>
        </Slot>
        <Fit w={28} ml={14}>DEU</Fit>
      </Tray>
      <Clock><Fit w={35}>11:03</Fit><Fit w={71}>01.05.2019</Fit></Clock>
      <Tray>
        <Slot $ml={22} $mt={4}>
          <BadgeSvg width="30" height="30" viewBox="0 0 30 30">
            <path d="M0 1H20V17H11L7 21V17H0Z" fill="#fff" /><path d="M4 5.500H16M4 9H16M4 12.500H12" stroke="#111" strokeWidth="1.200" />
            <circle cx="19.500" cy="20.500" r="9.800" fill="#2a2f32" stroke="#888" />
            <text x="15.500" y="25.500" fill="#fff">7</text>
          </BadgeSvg>
        </Slot>
      </Tray>
      <Slot $ml={16} />
      <ShowDesktop />
    </Taskbar>
  );
}

export default function App() {
  return (
    <>
      <GlobalStyle />
      <Desktop>
        <Word />
        <ExplorerWindow />
        <Excel />
        <Bar />
      </Desktop>
    </>
  );
}
